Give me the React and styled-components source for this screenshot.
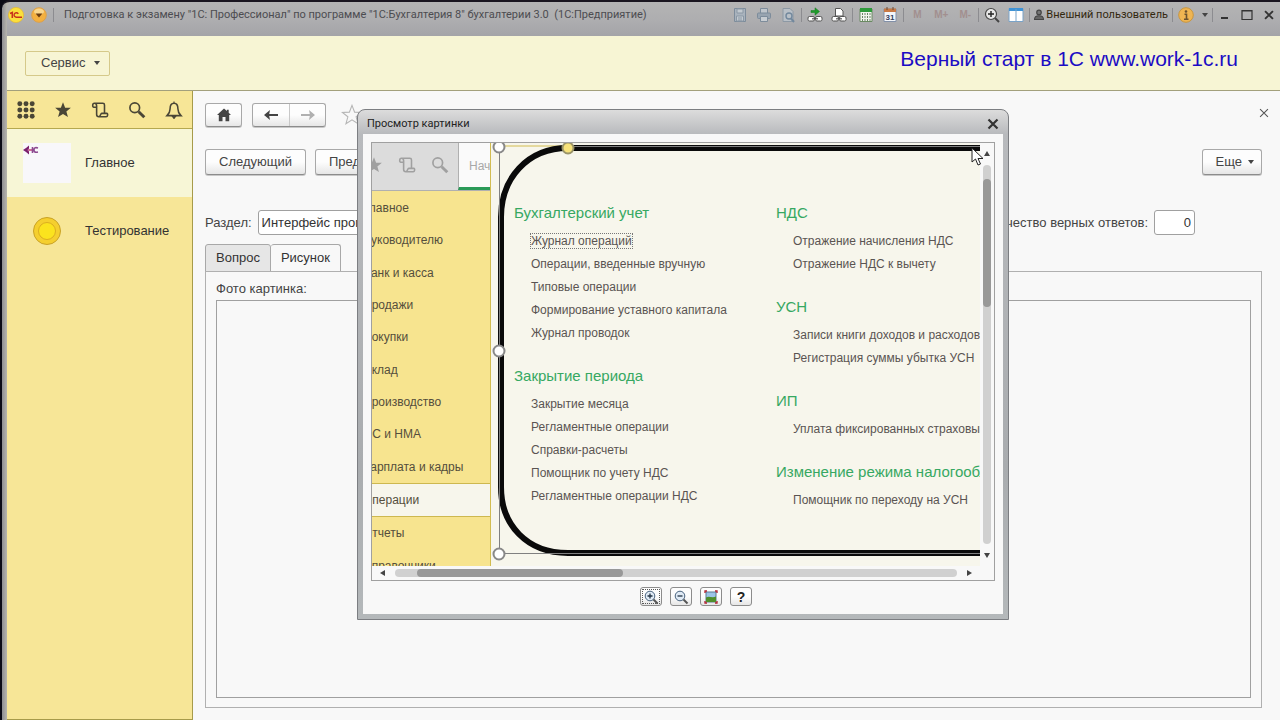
import React from 'react';
import styled, { createGlobalStyle, css } from 'styled-components';

const GlobalStyle = createGlobalStyle`
  * {
    box-sizing: border-box;
  }

  body {
    margin: 0;
    background: #0b0b16;
    color: #444;
    font-family: "Liberation Sans", Arial, sans-serif;
    font-size: 13px;
    line-height: 16px;
  }

  button, input {
    font: inherit;
    color: inherit;
  }

  button {
    padding: 0;
    border: none;
    background: none;
  }

  ul, h1, h2, h3 {
    margin: 0;
    padding: 0;
    list-style: none;
    font-size: inherit;
    font-weight: normal;
  }
`;

const sections = [
  'Главное', 'Руководителю', 'Банк и касса', 'Продажи', 'Покупки', 'Склад',
  'Производство', 'ОС и НМА', 'Зарплата и кадры', 'Операции', 'Отчеты', 'Справочники',
];

const columns = [
  [
    {
      title: 'Бухгалтерский учет',
      items: ['Журнал операций', 'Операции, введенные вручную', 'Типовые операции', 'Формирование уставного капитала', 'Журнал проводок'],
    },
    {
      title: 'Закрытие периода',
      items: ['Закрытие месяца', 'Регламентные операции', 'Справки-расчеты', 'Помощник по учету НДС', 'Регламентные операции НДС'],
    },
  ],
  [
    { title: 'НДС', items: ['Отражение начисления НДС', 'Отражение НДС к вычету'] },
    { title: 'УСН', items: ['Записи книги доходов и расходов', 'Регистрация суммы убытка УСН'] },
    { title: 'ИП', items: ['Уплата фиксированных страховых взносов'] },
    { title: 'Изменение режима налогообложения', items: ['Помощник по переходу на УСН'] },
  ],
];

/* ---------- icons ---------- */

const Icon = ({ size = 16, children, ...rest }) => (
  <svg width={size} height={size} viewBox="0 0 16 16" fill="none" aria-hidden="true" {...rest}>
    {children}
  </svg>
);

const LogoIcon = () => (
  <Icon size={16}>
    <circle cx="8" cy="8" r="7.6" fill="#fbe03c" stroke="#e8b92c" strokeWidth=".7" />
    <path d="M2 6.500L4.300 5.500V11" stroke="#c8321c" strokeWidth="1.600" />
    <path d="M10.300 6.800A2.300 2.200 0 1 0 8.500 10.200H14" stroke="#c8321c" strokeWidth="1.400" />
  </Icon>
);

const DropIcon = () => (
  <Icon size={16}>
    <circle cx="8" cy="8" r="7.3" fill="#f3b040" stroke="#dca04a" />
    <ellipse cx="8" cy="4.6" rx="5" ry="3" fill="#f9d68c" />
    <path d="M4.6 6.6h6.8L8 10.4z" fill="#6b3c10" />
  </Icon>
);

const SaveIcon = () => (
  <Icon>
    <path d="M2.5 1.5h11v13h-11z" stroke="#7d8c9b" fill="#a9b3bd" />
    <path d="M5 2h6v4H5zM4.500 9h7v5h-7z" fill="#c3cad0" stroke="#8b98a5" />
    <path d="M6 11h4M6 13h4" stroke="#8b98a5" />
  </Icon>
);

const PrintIcon = () => (
  <Icon>
    <path d="M4.500 6V1.500h7V6" stroke="#7d8c9b" fill="#c0c6cc" />
    <rect x="1.500" y="6" width="13" height="5.500" rx="1" fill="#98a4b0" stroke="#7d8c9b" />
    <path d="M4.500 9.500h7v5h-7z" fill="#c8cdd2" stroke="#7d8c9b" />
  </Icon>
);

const PreviewIcon = () => (
  <Icon>
    <path d="M3 1.500h7l3 3v10H3z" fill="#b9c0c7" stroke="#8c98a4" />
    <circle cx="9" cy="9" r="3" stroke="#72889d" strokeWidth="1.400" />
    <path d="M11 11.500l3 3.500" stroke="#72889d" strokeWidth="2" />
  </Icon>
);

const ChainIcon = ({ arrow }) => (
  <Icon>
    {arrow
      ? <path d="M4 3.500h4V.8l4.500 3.700L8 8.200V5.500H4z" fill="#1f9a2c" stroke="#127a1c" strokeWidth=".5" />
      : <path d="M4.500 1.500h5L12 4v5H4.500z" fill="#fff" stroke="#555" />}
    <rect x="1" y="9.500" width="6.500" height="4.500" rx="1.500" fill="#fff" stroke="#555" />
    <rect x="8.500" y="9.500" width="6.500" height="4.500" rx="1.500" fill="#fff" stroke="#555" />
    <path d="M5 11.800h6" stroke="#555" strokeWidth="1.200" />
  </Icon>
);

const CalcIcon = () => (
  <Icon>
    <path d="M2 2h12v12.500H2z" fill="#f2f5ef" stroke="#6a8a62" />
    <path d="M2 1h12v4H2z" fill="#2f9a3c" />
    <path d="M4.500 6v8M7 6v8M9.500 6v8M12 6v8" stroke="#6c8368" strokeDasharray="2 1" />
  </Icon>
);

const CalendarIcon = () => (
  <Icon>
    <path d="M2 2h12v12.500H2z" fill="#f4f6fa" stroke="#8290a8" />
    <path d="M2 1.500h12V5H2z" fill="#c97a45" />
    <path d="M5 0v3M11 0v3" stroke="#6d4a34" />
    <text x="8" y="12.500" fontSize="8" fontWeight="bold" textAnchor="middle" fill="#33415e">31</text>
  </Icon>
);

const MagnifierPlus = () => (
  <Icon>
    <circle cx="7" cy="7" r="5.500" fill="#e8e8e8" stroke="#444" strokeWidth="1.200" />
    <path d="M4 7h6M7 4v6" stroke="#222" strokeWidth="1.400" />
    <path d="M11 11l4 4" stroke="#444" strokeWidth="2" />
  </Icon>
);

const SplitIcon = () => (
  <Icon>
    <path d="M1 1.500h14v13H1z" fill="#fff" stroke="#7aa3c8" />
    <path d="M1 1h14v3H1z" fill="#3f93d6" />
    <path d="M8 2v12" stroke="#7aa3c8" />
  </Icon>
);

const PersonIcon = () => (
  <Icon size={12}>
    <circle cx="8" cy="4.500" r="3" fill="#777" stroke="#444" strokeWidth="1.600" />
    <path d="M2 14c0-4 3-5 6-5s6 1 6 5z" fill="#666" stroke="#444" strokeWidth="1.400" />
  </Icon>
);

const InfoIcon = () => (
  <Icon>
    <circle cx="8" cy="8" r="7.300" fill="#efb552" stroke="#c9963f" />
    <circle cx="8" cy="4.500" r="1.300" fill="#6a5230" />
    <path d="M6.500 7.200H8.500V12M6 12.200h4.500" stroke="#6a5230" strokeWidth="1.600" />
  </Icon>
);

const GridIcon = () => (
  <Icon size={18}>
    {[2.500, 8, 13.500].map(y => [2.500, 8, 13.500].map(x => (
      <circle key={`${x}-${y}`} cx={x} cy={y} r="2.200" fill="#4a4636" />
    )))}
  </Icon>
);

const StarIcon = ({ outline, color = '#4a4636' }) => (
  <Icon size={outline ? 22 : 18}>
    <path
      d="M8 1l1.900 4.900 5.100.200-4 3.200 1.400 5L8 11.500l-4.400 2.800 1.400-5-4-3.200 5.100-.200z"
      fill={outline ? 'none' : color}
      stroke={outline ? '#b5b5b5' : 'none'}
      strokeWidth=".8"
    />
  </Icon>
);

const ScrollIcon = ({ color = '#4a4636' }) => (
  <Icon size={18}>
    <path
      d="M4.500 5.500H2.500C1.200 5.500 1 2 3 2h7.500c1 0 1.500.6 1.500 1.500V11h2c1.200 0 1 3-.5 3H7C5.500 14 5 13 5 12V4.500C5 3 4.500 2 3.200 2M12 11H9.500c-1 0-1 3-2.500 3"
      stroke={color}
      strokeWidth="1.400"
    />
  </Icon>
);

const SearchIcon = ({ color = '#4a4636' }) => (
  <Icon size={18}>
    <circle cx="6" cy="6" r="4.300" stroke={color} strokeWidth="1.500" />
    <path d="M9.500 9.500l5 5" stroke={color} strokeWidth="2.600" />
  </Icon>
);

const BellIcon = () => (
  <Icon size={18}>
    <path d="M8 2C5.200 2 4.500 4.500 4.500 7c0 3-1.200 4.500-2.700 6h12.400c-1.500-1.500-2.700-3-2.700-6C11.500 4.500 10.800 2 8 2z" stroke="#4a4636" strokeWidth="1.400" />
    <path d="M8 .5V2M6.500 13.500h3L8 15.500z" stroke="#4a4636" fill="#4a4636" />
  </Icon>
);

const HomeIcon = () => (
  <Icon>
    <path d="M8 1.500L1 8h1.800v6.200h3.700V10h3v4.200h3.700V8H15l-2.300-2.200V2.800h-1.800V4z" fill="#444" />
  </Icon>
);

const ArrowIcon = ({ color, flip }) => (
  <Icon transform={flip ? 'scale(-1 1)' : undefined}>
    <path d="M1 8l6-5-.8 4H15v2H6.200l.8 4z" fill={color} />
  </Icon>
);

const CloseIcon = ({ size = 16, weight = 2.200, color = '#333' }) => (
  <Icon size={size}>
    <path d="M3.500 3.500l9 9M12.500 3.500l-9 9" stroke={color} strokeWidth={weight} />
  </Icon>
);

const ZoomIcon = ({ plus }) => (
  <Icon>
    <circle cx="7" cy="7" r="4.800" fill="#dfeaf5" stroke="#48627e" />
    <path d={plus ? 'M4.500 7h5M7 4.500v5' : 'M4.500 7h5'} stroke="#234" strokeWidth="1.300" />
    <path d="M10.500 10.500l4 4" stroke="#555" strokeWidth="2" />
  </Icon>
);

const PictureIcon = () => (
  <Icon>
    <path d="M3 3h10v10H3z" fill="#9cc4e8" stroke="#5a7894" />
    <path d="M3 8.500c3-2 6 1 10-1V13H3z" fill="#4f8f2c" />
    <path d="M2 4V2h2M12 2h2v2M14 12v2h-2M4 14H2v-2" stroke="#b02030" strokeWidth="1.300" />
  </Icon>
);

const Caret = styled.span`
  border: 3px solid transparent;
  border-top: 4px solid #444;
  border-bottom: none;
`;

/* ---------- window frame ---------- */

const AppWindow = styled.div`
  position: relative;
  display: flex;
  flex-direction: column;
  min-height: 100vh;
  padding-left: 5px;
  margin-left: 2px;
  border-top: 2px solid #1a1620;
  border-radius: 8px 0 0 0;
  background: linear-gradient(90deg, #8e8e92, #b7b5ae 5px);
`;

const TitleBar = styled.header`
  display: flex;
  align-items: center;
  height: 34px;
  padding-bottom: 8px;
  background: linear-gradient(180deg, #b4b4b4, #aeaeb0 50%, #a4a4a8);
  border-radius: 6px 0 0 0;
`;

const TitleIcons = styled.div`
  display: flex;
  gap: 7px;
  padding: 0 5px 0 1px;
`;

const TitleText = styled.h1`
  flex: 1;
  padding-left: 9px;
  font-family: Roboto, sans-serif;
  font-size: 11px;
  white-space: pre;
  color: #4c4c50;
`;

const Tool = styled.button`
  display: flex;
  align-items: center;
  justify-content: center;
  width: ${props => props.$width || 24}px;
  height: 24px;
  font-size: 10px;
  font-weight: bold;
  color: #a28f8f;
`;

const Separator = styled.span`
  width: 1px;
  height: 14px;
  margin: 0 1px;
  background: #8c8c90;
`;

const UserButton = styled.button`
  display: flex;
  align-items: center;
  gap: 1px;
  padding: 0 3px 0 2px;
  font-family: Roboto, sans-serif;
  font-size: 11px;
  color: #33280f;
`;

const Banner = styled.div`
  display: flex;
  align-items: center;
  justify-content: space-between;
  height: 55px;
  padding: 0 42px 0 18px;
  background: #f7f5d4;
  border-bottom: 1px solid #a3a07c;
`;

const ServiceButton = styled.button`
  display: flex;
  align-items: center;
  gap: 8px;
  height: 25px;
  padding: 0 9px 0 15px;
  border: 1px solid #d5c98a;
  border-radius: 2px;
`;

const BannerText = styled.span`
  padding-bottom: 8px;
  font-size: 21px;
  line-height: 24px;
  color: #1c0cc4;
`;

/* ---------- side bar ---------- */

const Workspace = styled.div`
  display: flex;
  flex: 1;
`;

const SideBar = styled.nav`
  flex: none;
  width: 186px;
  background: #f7e697;
  border-right: 1px solid #a79b4a;
  border-bottom: 1px solid #a79b4a;
`;

const SideTools = styled.div`
  display: flex;
  height: 38px;
  border-bottom: 1px solid #b5a850;

  > button {
    display: flex;
    flex: 1;
    align-items: center;
    justify-content: center;
  }
`;

const SideItem = styled.a`
  display: flex;
  align-items: center;
  gap: 14px;
  height: 68px;
  padding-left: 16px;
  color: #333;
  text-decoration: none;
  background: ${props => (props.$active ? '#f7f6d6' : 'transparent')};
`;

const Thumb = styled.span`
  display: flex;
  width: 48px;
  height: 40px;
  background: ${props => (props.$filled ? '#f8f7fa' : 'transparent')};
  justify-content: ${props => (props.$filled ? 'flex-start' : 'center')};
  align-items: ${props => (props.$filled ? 'flex-start' : 'center')};
`;

/* ---------- main form ---------- */

const Main = styled.main`
  display: flex;
  flex: 1;
  flex-direction: column;
  min-width: 0;
  padding: 12px 18px 12px 12px;
  background: #f8f8f8;
`;

const Row = styled.div`
  display: flex;
  align-items: center;
  gap: ${props => props.$gap || 9}px;
  margin-bottom: ${props => props.$space || 0}px;
`;

const FormHeader = styled(Row)`
  margin-right: -9px;
`;

const Spacer = styled.span`
  flex: 1;
`;

const CountGap = styled.span`
  width: 61px;
`;

const buttonFace = css`
  border: 1px solid #a8a8a8;
  border-bottom-color: #8c8c8c;
  border-radius: 3px;
  background: linear-gradient(180deg, #fdfdfd 50%, #e6e6e6);
  box-shadow: 0 1px 0 #c8c8c8;
`;

const Button = styled.button`
  ${buttonFace}
  display: flex;
  align-items: center;
  justify-content: center;
  gap: 6px;
  height: 26px;
  padding: ${props => (props.$menu ? '0 7px 0 13px' : '0 13px')};
`;

const IconButton = styled.button`
  ${buttonFace}
  display: flex;
  align-items: center;
  justify-content: center;
  width: 37px;
  height: 24px;
`;

const ButtonPair = styled.div`
  ${buttonFace}
  display: flex;
  margin-right: 5px;

  > button {
    display: flex;
    align-items: center;
    justify-content: center;
    width: 36px;
    height: 22px;
  }

  > button + button {
    border-left: 1px solid #c8c8c8;
  }
`;

const Input = styled.input`
  width: ${props => props.$width}px;
  height: 25px;
  padding: 0 3px;
  border: 1px solid #a0a0a0;
  border-radius: 3px;
  background: #fff;
  color: #333;
  text-align: ${props => props.$align || 'left'};
`;

const Tabs = styled.div`
  display: flex;
  height: 28px;
  margin-bottom: -1px;
`;

const Tab = styled.button`
  padding: 0 10px;
  border: 1px solid #a8a8a8;
  border-bottom-color: ${props => (props.$active ? '#f8f8f8' : '#a8a8a8')};
  border-left-width: ${props => (props.$active ? 0 : 1)}px;
  border-radius: 3px 3px 0 0;
  background: ${props => (props.$active ? '#f8f8f8' : '#e6e6e6')};
  color: #333;
`;

const TabPanel = styled.section`
  display: flex;
  flex: 1;
  flex-direction: column;
  gap: 3px;
  padding: 9px 10px 9px;
  border: 1px solid #b0b0b0;
`;

const PhotoFrame = styled.div`
  flex: 1;
  border: 1px solid #a0a0a0;
`;

/* ---------- picture dialog ---------- */

const Dialog = styled.div`
  position: absolute;
  top: 107px;
  left: 355px;
  width: 652px;
  padding: 0 5px 5px;
  border: 1px solid #7c7e82;
  border-radius: 8px 8px 0 0;
  background: linear-gradient(180deg, #dcdcdc, #b8babd 24px, #a9acaf 70%, #b4b8ba);
`;

const DialogTitle = styled.div`
  display: flex;
  align-items: center;
  justify-content: space-between;
  height: 24px;
  padding: 4px 2px 0 4px;
  font-family: Roboto, sans-serif;
  font-size: 11px;
  color: #222;

  > button {
    display: flex;
  }
`;

const DialogBody = styled.div`
  padding: 8px;
  background: #f8f8f8;
`;

const Viewer = styled.div`
  display: grid;
  grid-template-columns: 1fr 14px;
  grid-template-rows: 423px 14px;
  border: 1px solid #a0a0a0;
`;

const ScrollBar = styled.div`
  display: flex;
  flex-direction: ${props => (props.$vertical ? 'column' : 'row')};
  align-items: center;
  gap: ${props => (props.$vertical ? 9 : 10)}px;
  padding: ${props => (props.$vertical ? '8px 0' : '0 8px')};
`;

const ScrollArrow = styled.button`
  flex: none;
  border: 3px solid transparent;
  ${props => props.$side === 'up' && 'border-top: none; border-bottom: 5px solid #444;'}
  ${props => props.$side === 'down' && 'border-bottom: none; border-top: 5px solid #444;'}
  ${props => props.$side === 'left' && 'border-left: none; border-right: 5px solid #444;'}
  ${props => props.$side === 'right' && 'border-right: none; border-left: 5px solid #444;'}
`;

const Track = styled.div`
  display: flex;
  flex: 1;
  flex-direction: ${props => (props.$vertical ? 'column' : 'row')};
  ${props => (props.$vertical ? 'width: 8px; padding-top: 14px;' : 'height: 8px; padding-left: 22px;')}
  border-radius: 4px;
  background: #d0d0d0;
`;

const TrackThumb = styled.div`
  width: ${props => (props.$vertical ? 8 : 206)}px;
  height: ${props => (props.$vertical ? 128 : 8)}px;
  border-radius: 4px;
  background: #989898;
`;

const Picture = styled.div`
  position: relative;
  display: flex;
  overflow: hidden;
  background: #f7f6ec;
  font-size: 12px;
  color: #5a5452;
`;

const PictureSide = styled.div`
  flex: none;
  width: 119px;
  overflow: hidden;
  border-right: 1px solid #d2bc50;
  background: #f7e48f;
`;

const PictureTop = styled.div`
  display: flex;
  height: 48px;
  border-bottom: 1px solid #b0b0b0;
  background: #dcdcdc;
`;

const PictureTools = styled.div`
  display: flex;
  flex: 1;
  align-items: center;
  gap: 15px;
  margin-left: -7px;
  padding-bottom: 3px;
`;

const StartTab = styled.div`
  width: 32px;
  padding: 15px 0 0 10px;
  overflow: hidden;
  border-left: 1px solid #b0b0b0;
  border-bottom: 3px solid #2a9a58;
  background: #fafafa;
  color: #a8a8a8;
`;

const SectionList = styled.ul`
  display: flex;
  flex-direction: column;
  height: 391px;
  padding-top: 1px;
`;

const SectionRow = styled.li`
  display: flex;
  flex: 1;
  align-items: center;
  margin-left: -9px;
  white-space: nowrap;
  color: #554e3c;
  ${props => props.$active && css`
    border-top: 1px solid #cdb850;
    border-bottom: 1px solid #cdb850;
    background: #f7f6ec;
  `}
`;

const PictureMenu = styled.div`
  display: grid;
  flex: none;
  grid-template-columns: 262px 262px;
  padding: 58px 0 0 23px;
  white-space: nowrap;
`;

const Group = styled.section`
  margin-bottom: 19px;
`;

const GroupTitle = styled.h3`
  margin-bottom: 5px;
  font-size: 15px;
  line-height: 24px;
  color: #36a862;
`;

const GroupItem = styled.li`
  padding-left: 17px;
  line-height: 23px;

  > span {
    outline: ${props => (props.$focused ? '1px dotted #777' : 'none')};
  }
`;

const Annotation = styled.svg`
  position: absolute;
  top: 0;
  left: 119px;
`;

const DialogTools = styled.div`
  display: flex;
  justify-content: center;
  gap: 8px;
  padding: 6px 0 0 26px;

  > button {
    ${buttonFace}
    display: flex;
    align-items: center;
    justify-content: center;
    width: 22px;
    height: 19px;
    box-shadow: none;
    border-color: #8c8c8c;
    font-size: 14px;
    font-weight: bold;
    color: #222;
  }

  > button:first-child {
    outline: 1px dotted #555;
    outline-offset: -3px;
  }
`;

const Pointer = styled.svg`
  position: absolute;
  top: 145px;
  left: 969px;
`;

const PictureDialog = () => (
  <Dialog role="dialog" aria-labelledby="picture-title">
    <DialogTitle>
      <h2 id="picture-title">Просмотр картинки</h2>
      <button type="button" aria-label="Закрыть"><CloseIcon /></button>
    </DialogTitle>
    <DialogBody>
      <Viewer>
        <Picture>
          <PictureSide>
            <PictureTop>
              <PictureTools>
                <StarIcon color="#a0a0a0" />
                <ScrollIcon color="#a0a0a0" />
                <SearchIcon color="#a0a0a0" />
              </PictureTools>
              <StartTab>Начальная</StartTab>
            </PictureTop>
            <SectionList>
              {sections.map(name => (
                <SectionRow key={name} $active={name === 'Операции'}>{name}</SectionRow>
              ))}
            </SectionList>
          </PictureSide>
          <PictureMenu>
            {columns.map((groups, i) => (
              <div key={i}>
                {groups.map(group => (
                  <Group key={group.title}>
                    <GroupTitle>{group.title}</GroupTitle>
                    <ul>
                      {group.items.map(item => (
                        <GroupItem key={item} $focused={item === 'Журнал операций'}><span>{item}</span></GroupItem>
                      ))}
                    </ul>
                  </Group>
                ))}
              </div>
            ))}
          </PictureMenu>
          {/* frame with drag handles drawn over the menu */}
          <Annotation width="489" height="423" viewBox="0 0 489 423" fill="none" aria-hidden="true">
            <path d="M8 3H77" stroke="#d2bc50" />
            <path d="M500 5H77C36 5 10 36 10 74V344C10 382 36 410 77 410H500" stroke="#0a0a0a" strokeWidth="6" />
            <path d="M77 3.500H500M8.500 4V410.500H500" stroke="#808080" />
            <circle cx="8" cy="4" r="5.500" fill="#fff" stroke="#888" strokeWidth="2" />
            <circle cx="8" cy="208" r="5.500" fill="#fff" stroke="#888" strokeWidth="2" />
            <circle cx="8" cy="411" r="5.500" fill="#fff" stroke="#888" strokeWidth="2" />
            <circle cx="77" cy="5" r="5.500" fill="#f7e27a" stroke="#9a9468" strokeWidth="2" />
          </Annotation>
        </Picture>
        <ScrollBar $vertical>
          <ScrollArrow type="button" $side="up" aria-label="Вверх" />
          <Track $vertical><TrackThumb $vertical /></Track>
          <ScrollArrow type="button" $side="down" aria-label="Вниз" />
        </ScrollBar>
        <ScrollBar>
          <ScrollArrow type="button" $side="left" aria-label="Влево" />
          <Track><TrackThumb /></Track>
          <ScrollArrow type="button" $side="right" aria-label="Вправо" />
        </ScrollBar>
      </Viewer>
      <DialogTools>
        <button type="button" aria-label="Увеличить"><ZoomIcon plus /></button>
        <button type="button" aria-label="Уменьшить"><ZoomIcon /></button>
        <button type="button" aria-label="По размеру"><PictureIcon /></button>
        <button type="button">?</button>
      </DialogTools>
    </DialogBody>
  </Dialog>
);

const App = () => (
  <>
    <GlobalStyle />
    <AppWindow>
      <TitleBar>
        <TitleIcons><LogoIcon /><DropIcon /></TitleIcons>
        <Separator />
        <TitleText>{'Подготовка к экзамену "1С: Профессионал" по программе "1С:Бухгалтерия 8" бухгалтерии 3.0  (1С:Предприятие)'}</TitleText>
        <Tool aria-label="Сохранить"><SaveIcon /></Tool>
        <Tool aria-label="Печать"><PrintIcon /></Tool>
        <Tool aria-label="Просмотр"><PreviewIcon /></Tool>
        <Separator />
        <Tool aria-label="Перейти по ссылке"><ChainIcon arrow /></Tool>
        <Tool aria-label="Получить ссылку"><ChainIcon /></Tool>
        <Separator />
        <Tool aria-label="Калькулятор"><CalcIcon /></Tool>
        <Tool aria-label="Календарь"><CalendarIcon /></Tool>
        <Separator />
        <Tool>M</Tool>
        <Tool>M+</Tool>
        <Tool>M-</Tool>
        <Separator />
        <Tool aria-label="Масштаб"><MagnifierPlus /></Tool>
        <Tool aria-label="Панели"><SplitIcon /></Tool>
        <Separator />
        <UserButton><PersonIcon />Внешний пользователь</UserButton>
        <Separator />
        <Tool aria-label="Справка"><InfoIcon /></Tool>
        <Tool $width={13} aria-label="Меню"><Caret /></Tool>
        <Separator />
        <Tool $width={22} aria-label="Свернуть"><Icon><path d="M4 11h7" stroke="#333" strokeWidth="2" /></Icon></Tool>
        <Tool $width={22} aria-label="Развернуть"><Icon><path d="M3 3.500h10v9H3zM3 4h10" stroke="#333" strokeWidth="1.200" /></Icon></Tool>
        <Tool $width={22} aria-label="Закрыть"><CloseIcon size={14} /></Tool>
      </TitleBar>

      <Banner>
        <ServiceButton>Сервис <Caret /></ServiceButton>
        <BannerText>Верный старт в 1С www.work-1c.ru</BannerText>
      </Banner>

      <Workspace>
        <SideBar>
          <SideTools>
            <button aria-label="Меню функций"><GridIcon /></button>
            <button aria-label="Избранное"><StarIcon /></button>
            <button aria-label="История"><ScrollIcon /></button>
            <button aria-label="Поиск"><SearchIcon /></button>
            <button aria-label="Оповещения"><BellIcon /></button>
          </SideTools>
          <SideItem href="#main" $active>
            <Thumb $filled>
              <svg width="18" height="14" viewBox="0 0 18 14" fill="none" aria-hidden="true">
                <path d="M0 7l3-2 3-2.500V5.500L4.500 7 6 8.500v3L3 9z" fill="#7a1f6c" />
                <path d="M5 7h4" stroke="#c0407a" strokeWidth="1.500" />
                <path d="M9.500 4V10M15 5c-3-1-4 0-4 2s1 2.500 4 2" stroke="#8c4a90" strokeWidth="1.600" />
              </svg>
            </Thumb>
            Главное
          </SideItem>
          <SideItem href="#testing">
            <Thumb>
              <svg width="30" height="30" viewBox="0 0 30 30" aria-hidden="true">
                <circle cx="15" cy="15" r="13.500" fill="#f5cf2e" stroke="#c9a227" />
                <circle cx="15" cy="15" r="8.500" fill="#fbe31e" stroke="#dcae20" />
              </svg>
            </Thumb>
            Тестирование
          </SideItem>
        </SideBar>

        <Main>
          <FormHeader $gap={10} $space={22}>
            <IconButton aria-label="Начало"><HomeIcon /></IconButton>
            <ButtonPair>
              <button aria-label="Назад"><ArrowIcon color="#444" /></button>
              <button aria-label="Вперед"><ArrowIcon color="#b0b0b0" flip /></button>
            </ButtonPair>
            <StarIcon outline />
            <Spacer />
            <button aria-label="Закрыть форму"><CloseIcon size={14} weight={1.200} color="#555" /></button>
          </FormHeader>
          <Row $space={35}>
            <Button>Следующий</Button>
            <Button>Предыдущий</Button>
            <Spacer />
            <Button $menu>Еще <Caret /></Button>
          </Row>
          <Row $gap={6} $space={9}>
            <label htmlFor="section">Раздел:</label>
            <Input id="section" $width={300} defaultValue="Интерфейс программы" />
            <Spacer />
            <label htmlFor="score">Количество верных ответов:</label>
            <Input id="score" $width={41} $align="right" defaultValue="0" />
            <CountGap />
          </Row>
          <Tabs role="tablist">
            <Tab role="tab">Вопрос</Tab>
            <Tab role="tab" $active aria-selected="true">Рисунок</Tab>
          </Tabs>
          <TabPanel>
            <span>Фото картинка:</span>
            <PhotoFrame />
          </TabPanel>
        </Main>
      </Workspace>

      <PictureDialog />

      <Pointer width="14" height="20" viewBox="0 0 14 20" aria-hidden="true">
        <path d="M1 1v14l3.500-3 2.500 6 2.500-1-2.500-5.500H12z" fill="#fff" stroke="#222" />
      </Pointer>
    </AppWindow>
  </>
);

export default App;
